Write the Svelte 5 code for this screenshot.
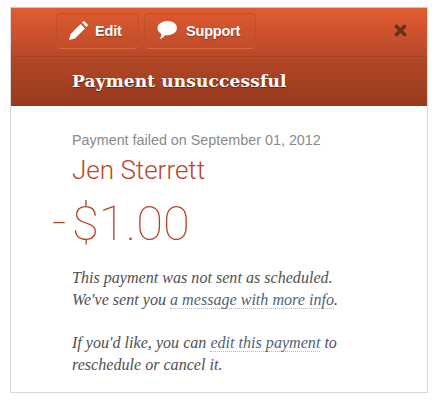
<script>
  let title = "Payment unsuccessful";
</script>

<div class="card">
  <div class="toolbar">
    <button class="btn edit">
      <svg width="20" height="20" viewBox="0 0 20 20"><path d="M1 19l1.600-6L12.600 3l4.400 4.400-10 10zM14 1.600l1-1c.5-.5 1.200-.5 1.700 0l2.700 2.700c.5.5.5 1.200 0 1.700l-1 1z" fill="#fff"/></svg>
      Edit
    </button>
    <button class="btn support">
      <svg width="22" height="21" viewBox="0 0 22 21"><path d="M11.500 1c5.300 0 9.500 3.100 9.500 7.100s-4.200 7.100-9.500 7.100c-.8 0-1.500-.1-2.200-.2-1.200 2-3.200 3.500-5.800 4 1.100-1.300 1.800-2.800 1.900-4.900C3 12.800 1.500 10.600 1.500 8.100 1.500 4.100 6.200 1 11.500 1z" fill="#fff"/></svg>
      Support
    </button>
    <button class="close" aria-label="Close">
      <svg width="13" height="13" viewBox="0 0 13 13"><path d="M2.500 2.500l8 8M10.500 2.500l-8 8" stroke="#6e2f14" stroke-width="3.600" stroke-linecap="round"/></svg>
    </button>
  </div>
  <div class="titlebar">
    <h1>{title}</h1>
  </div>
  <div class="body">
    <p class="date">Payment failed on September 01, 2012</p>
    <p class="name">Jen Sterrett</p>
    <p class="amount"><span class="minus">-</span>$1.00</p>
    <p class="note">This payment was not sent as scheduled.<br />We've sent you <a href="#msg">a message with more info</a>.</p>
    <p class="note">If you'd like, you can <a href="#edit">edit this payment</a> to<br />reschedule or cancel it.</p>
  </div>
</div>

<style>
  :global(body) {
    background: #fff;
  }
  .card {
    box-sizing: border-box;
    width: 418px;
    height: 386px;
    margin: 7px 0 0 10px;
    border: 1px solid #d8d8d8;
    border-top-color: #c8c8c8;
    background: #fff;
  }
  .toolbar {
    display: flex;
    align-items: center;
    gap: 5px;
    height: 49px;
    box-sizing: border-box;
    padding: 0 20px 3px 45px;
    background: linear-gradient(#e25c31, #b9492a);
    border-bottom: 1px solid #a9401f;
  }
  .btn {
    display: flex;
    align-items: center;
    height: 36px;
    box-sizing: border-box;
    border: 1px solid #bf4f2b;
    border-bottom-color: #d86a42;
    border-radius: 5px;
    background: linear-gradient(#d9582f, #c04d2a);
    color: #fff;
    font-family: "Liberation Sans", Arial, sans-serif;
    font-size: 14.500px;
    font-weight: 700;
    letter-spacing: -0.2px;
    text-shadow: 0 1px 1px rgba(90, 30, 10, 0.5);
  }
  .edit {
    width: 83px;
    gap: 7px;
    padding: 0 0 0 11px;
  }
  .support {
    width: 112px;
    gap: 8px;
    padding: 0 0 0 11px;
  }
  .close {
    display: flex;
    margin-left: auto;
    padding: 0;
    border: 0;
    background: none;
  }
  .titlebar {
    display: flex;
    align-items: center;
    height: 49px;
    box-sizing: border-box;
    padding: 0 0 0 61px;
    background: linear-gradient(#b34827, #98391e);
    border-bottom: 1px solid #8e3519;
  }
  h1 {
    margin: 0;
    color: #fff;
    font-family: "DejaVu Serif", serif;
    font-size: 17px;
    font-weight: 700;
    letter-spacing: 0.15px;
    text-shadow: 0 1px 1px rgba(70, 20, 5, 0.6);
  }
  .body {
    padding: 26px 0 0 61px;
  }
  p {
    margin: 0;
  }
  .date {
    color: #8a8a8a;
    font-family: "Liberation Sans", Arial, sans-serif;
    font-size: 14.350px;
    line-height: 16px;
  }
  .name {
    margin-top: 7px;
    color: #bb4429;
    font-family: "Roboto", "Liberation Sans", sans-serif;
    font-weight: 300;
    font-size: 26px;
    line-height: 30px;
  }
  .amount {
    position: relative;
    margin-top: 11px;
    color: #b83f24;
    font-family: "Roboto", "Liberation Sans", sans-serif;
    font-weight: 100;
    font-size: 49px;
    line-height: 56px;
  }
  .minus {
    position: absolute;
    left: -20px;
    top: -2px;
  }
  .note {
    margin-top: 15px;
    color: #505050;
    font-family: "Liberation Serif", serif;
    font-style: italic;
    font-size: 16.100px;
    line-height: 22px;
  }
  .note + .note {
    margin-top: 21px;
  }
  a {
    color: #4f6478;
    text-decoration: none;
    border-bottom: 1px dotted #9cc0d8;
  }
</style>
